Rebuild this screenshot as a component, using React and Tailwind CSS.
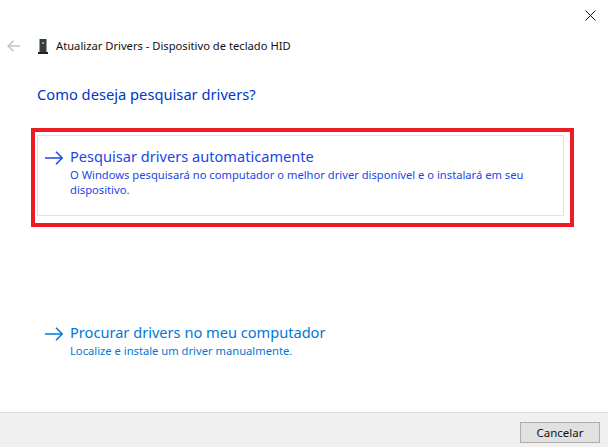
import React from "react";

function Arrow({ color }) {
  return (
    <svg width="18" height="14" viewBox="0 0 18 14" fill="none" stroke={color} strokeWidth="1.5" className="shrink-0">
      <path d="M0 7H17" />
      <path d="M11 0.7L17.2 7L11 13.3" />
    </svg>
  );
}

function Option({ color, title, desc, boxed, className }) {
  return (
    <div className={`flex items-start pl-[7px] pr-[6px] pt-[10px] h-[81px] w-[527px] border ${boxed ? "border-[#e3e3e3]" : "border-transparent"} ${className}`}>
      <div className="pt-[5px] w-[25px]">
        <Arrow color={color} />
      </div>
      <div style={{ color }}>
        <div className="text-[14.6px] leading-[20px]">{title}</div>
        <div className="text-[11.2px] leading-[14.5px] mt-[2px]">{desc}</div>
      </div>
    </div>
  );
}

export default function App() {
  return (
    <div className="relative w-[608px] h-[447px] bg-white flex flex-col font-['Noto_Sans','Open_Sans',sans-serif] overflow-hidden">
      <div className="flex justify-end pt-[10px] pr-[12px] h-[35px]">
        <svg width="11" height="11" viewBox="0 0 11 11" stroke="#111" strokeWidth="1" fill="none">
          <path d="M0.5 0.5L10.5 10.5M10.5 0.5L0.5 10.5" />
        </svg>
      </div>
      <div className="flex items-center h-[22px] pl-[7px]">
        <svg width="13" height="12" viewBox="0 0 13 12" fill="none" stroke="#c4c4c4" strokeWidth="1.6">
          <path d="M1 6H13" />
          <path d="M6.5 0.8L1.2 6L6.5 11.2" />
        </svg>
        <svg width="10" height="15" viewBox="0 0 10 15" className="ml-[18px]">
          <rect x="1.5" y="0" width="7" height="13" fill="#3a3a3a" />
          <rect x="4" y="3" width="2" height="2" fill="#2fe05f" />
          <rect x="0" y="13" width="10" height="2" fill="#222" />
        </svg>
        <span className="ml-[8px] text-[11.2px] leading-[16px] text-[#111]">Atualizar Drivers - Dispositivo de teclado HID</span>
      </div>
      <h1 className="ml-[37px] mt-[26px] text-[14.7px] leading-[22px] font-normal text-[#0037c8]">Como deseja pesquisar drivers?</h1>
      <Option
        boxed
        className="ml-[37px] mt-[30px]"
        color="#1a47e6"
        title="Pesquisar drivers automaticamente"
        desc={<>O Windows pesquisará no computador o melhor driver disponível e o instalará em seu<br />dispositivo.</>}
      />
      <Option
        className="ml-[37px] mt-[95px]"
        color="#0078d7"
        title="Procurar drivers no meu computador"
        desc="Localize e instale um driver manualmente."
      />
      <div className="mt-auto h-[35px] bg-[#f0f0f0] border-t border-[#dfdfdf] flex justify-end items-start pt-[9px] pr-[8px]">
        <button className="w-[80px] h-[21px] bg-[#e1e1e1] border border-[#adadad] text-[11.5px] leading-[18px] text-[#111]">Cancelar</button>
      </div>
      <div className="absolute left-[31px] top-[128px] w-[543px] h-[99px] border-4 border-[#ed1c24] pointer-events-none" />
    </div>
  );
}
